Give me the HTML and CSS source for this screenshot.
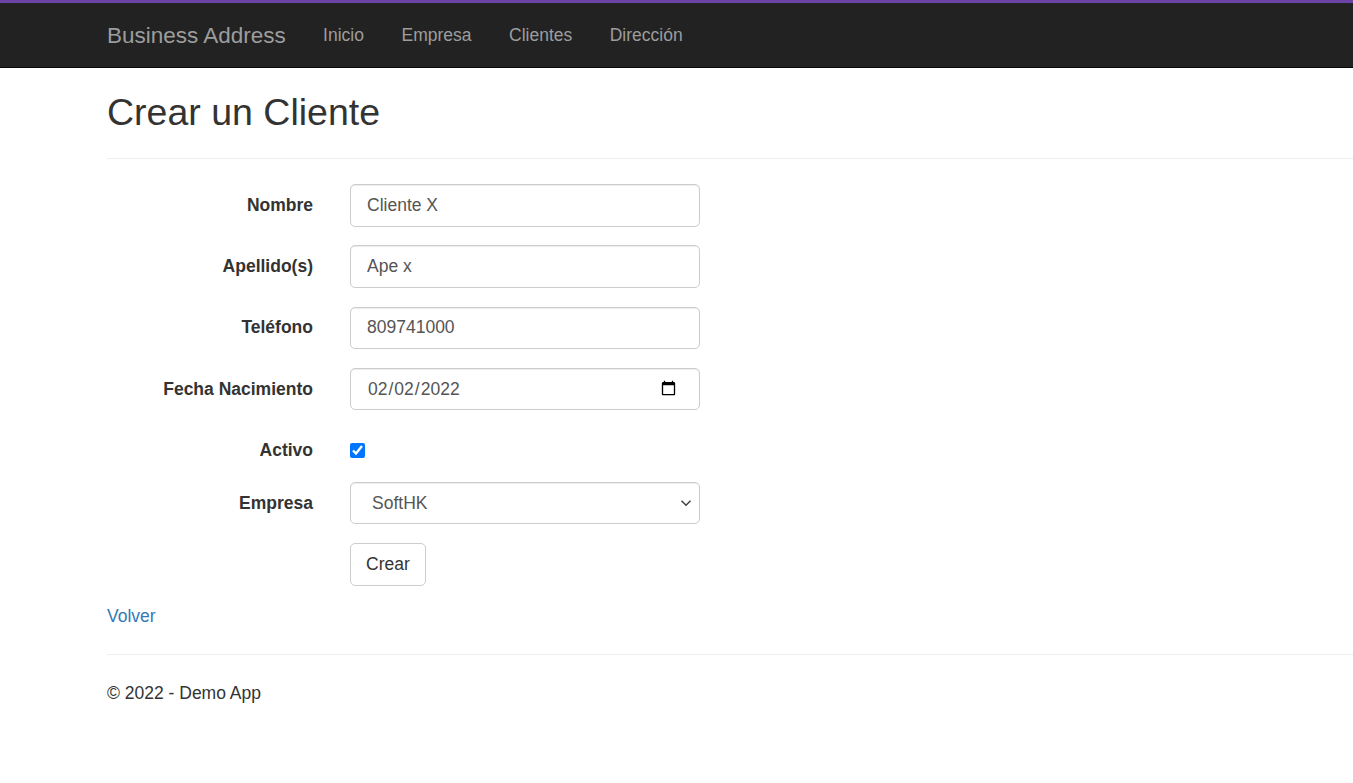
FILE: index.html
```html
<!DOCTYPE html>
<html lang="es">
<head>
<meta charset="utf-8">
<title>Crear un Cliente - Business Address</title>
<link rel="stylesheet" href="styles.css">
</head>
<body>
<div class="topbar"></div>
<nav class="navbar">
  <div class="nav-inner">
    <a class="brand" href="#">Business Address</a>
    <ul class="nav">
      <li><a href="#">Inicio</a></li>
      <li><a href="#">Empresa</a></li>
      <li><a href="#">Clientes</a></li>
      <li><a href="#">Dirección</a></li>
    </ul>
  </div>
</nav>
<main class="content">
  <h2 class="title">Crear un Cliente</h2>
  <hr class="rule">
  <form class="form">
    <div class="group">
      <label class="label" for="nombre">Nombre</label>
      <div class="field"><input class="control" id="nombre" type="text" value="Cliente X"></div>
    </div>
    <div class="group">
      <label class="label" for="apellido">Apellido(s)</label>
      <div class="field"><input class="control" id="apellido" type="text" value="Ape x"></div>
    </div>
    <div class="group">
      <label class="label" for="telefono">Teléfono</label>
      <div class="field"><input class="control" id="telefono" type="text" value="809741000"></div>
    </div>
    <div class="group">
      <label class="label" for="fecha">Fecha Nacimiento</label>
      <div class="field"><input class="control date" id="fecha" type="date" value="2022-02-02"></div>
    </div>
    <div class="group group-check">
      <label class="label" for="activo">Activo</label>
      <div class="field field-check"><input class="check" id="activo" type="checkbox" checked></div>
    </div>
    <div class="group">
      <label class="label" for="empresa">Empresa</label>
      <div class="field select-wrap">
        <select class="control select" id="empresa">
          <option>SoftHK</option>
        </select>
        <svg class="chevron" width="12" height="8" viewBox="0 0 12 8" aria-hidden="true"><path d="M1.5 1.8 6 6.2 10.5 1.8" fill="none" stroke="#444" stroke-width="1.6"/></svg>
      </div>
    </div>
    <div class="group">
      <span class="label"></span>
      <div class="field"><button class="btn" type="button">Crear</button></div>
    </div>
  </form>
  <div class="back"><a href="#">Volver</a></div>
  <hr class="rule footer-rule">
  <footer class="footer"><p>© 2022 - Demo App</p></footer>
</main>
</body>
</html>
```
FILE: styles.css
```css
* { box-sizing: border-box; }
html, body { margin: 0; padding: 0; }
body {
  font-family: "Liberation Sans", Arial, Helvetica, sans-serif;
  font-size: 17.5px;
  line-height: 25px;
  color: #333;
  background: #fff;
  overflow-x: hidden;
}
.topbar { height: 3px; background: #6d44a5; }
.navbar {
  background: #222;
  border-bottom: 1px solid #080808;
}
.nav-inner {
  height: 64px;
  display: flex;
  align-items: center;
  padding-left: 107px;
}
.brand {
  font-size: 22.5px;
  line-height: 25px;
  color: #9d9d9d;
  text-decoration: none;
  margin-right: 18.5px;
}
.nav {
  display: flex;
  list-style: none;
  margin: 0;
  padding: 0;
}
.nav a {
  display: block;
  padding: 0 18.75px;
  color: #9d9d9d;
  text-decoration: none;
  font-size: 17.5px;
  line-height: 25px;
}
.content { padding-left: 107px; }
.title {
  margin: 24px 0 0;
  font-size: 37.5px;
  line-height: 41.25px;
  font-weight: 500;
  color: #333;
}
.rule {
  margin: 24.75px 0 0;
  border: 0;
  border-top: 1px solid #eee;
  height: 0;
}
.form { margin-top: 25px; }
.group {
  display: grid;
  grid-template-columns: 206px 350px;
  column-gap: 37px;
  margin-bottom: 18.75px;
}
.label {
  text-align: right;
  font-weight: 700;
  padding-top: 8.75px;
  line-height: 25px;
  color: #333;
}
.group-check { height: 34px; }
.field-check { padding-top: 14px; }
.check {
  width: 15px;
  height: 15px;
  margin: 0;
  accent-color: #0075ff;
  display: block;
}
.control {
  display: block;
  width: 350px;
  height: 42.5px;
  padding: 7.5px 15px 7.5px 16px;
  font-family: "Liberation Sans", Arial, Helvetica, sans-serif;
  font-size: 17.5px;
  line-height: 25px;
  color: #555;
  background: #fff;
  border: 1px solid #ccc;
  border-radius: 5px;
  box-shadow: inset 0 1px 1px rgba(0,0,0,.075);
  margin: 0;
}
.date { padding-left: 16px; padding-right: 20px; }
.select-wrap { position: relative; width: 350px; }
.select {
  -webkit-appearance: none;
  appearance: none;
  padding-left: 21px;
  padding-right: 30px;
}
.chevron {
  position: absolute;
  right: 8px;
  top: 17px;
  pointer-events: none;
}
.btn {
  display: inline-block;
  height: 42.5px;
  padding: 7.5px 15px;
  font-family: "Liberation Sans", Arial, Helvetica, sans-serif;
  font-size: 17.5px;
  line-height: 25px;
  color: #333;
  background: #fff;
  border: 1px solid #ccc;
  border-radius: 5px;
  margin: 0;
}
.back { line-height: 25px; }
.back a { color: #337ab7; text-decoration: none; }
.footer-rule { margin-top: 25px; }
.footer p { margin: 26px 0 0; line-height: 25px; }
```
